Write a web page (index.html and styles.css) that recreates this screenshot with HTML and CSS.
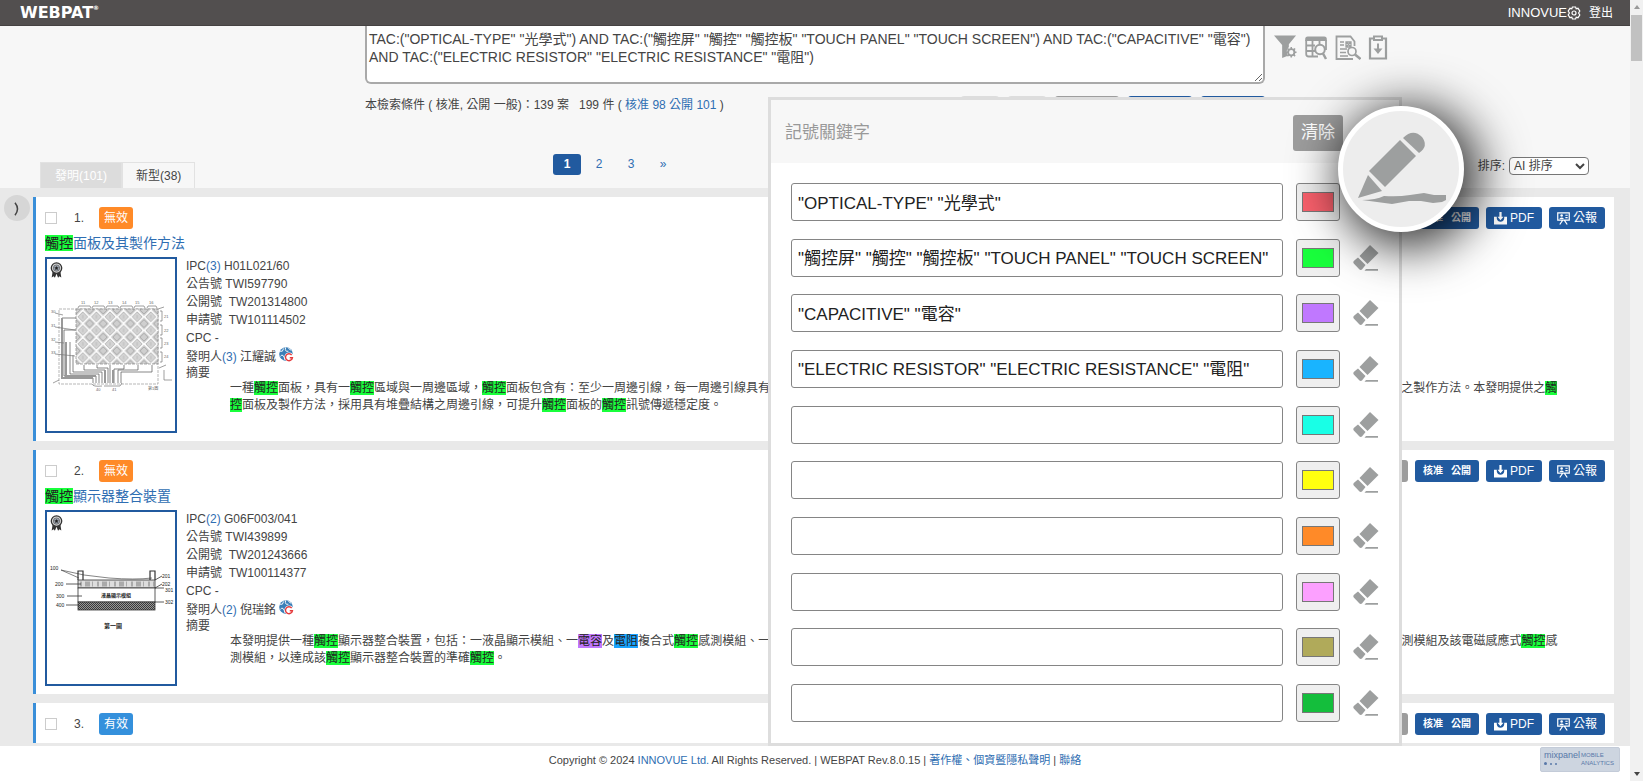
FILE: index.html
```
<!DOCTYPE html>
<html lang="zh-Hant">
<head>
<meta charset="utf-8">
<title>WEBPAT</title>
<link rel="stylesheet" href="styles.css">
</head>
<body>
<svg class="defs" width="0" height="0" aria-hidden="true">
  <defs>
    <symbol id="eraser" viewBox="0 0 26 26"><path d="M17 0 25.500 8 14.500 19 6.500 11Z"/><path d="M5 12.500 12.500 20 9 24.500Q7.500 25.500 6 24L.8 18.500Q-.3 17 1 15.800Z"/><path d="M13 24h12v1.800H11.500z"/></symbol>
    <symbol id="download" viewBox="0 0 14 14"><path d="M0 5h3v2q.8 3.500 4 3.500T11 7V5h3v8.500H0z"/><path d="M5.800 0h2.400v5h2L7 9 3.800 5h2z"/></symbol>
    <symbol id="gazette" viewBox="0 0 14 14"><path fill="none" stroke="currentColor" stroke-width="1.300" d="M.8 1h12.400v7.800H.8zM3 13.500l3-4.500M11 13.500L8 9M9 3.500h2.500M9 6h2.500"/><circle cx="5" cy="3.800" r="1.400"/><path d="M2.500 7.500q2.500-3 5 0z"/></symbol>
    <symbol id="globe" viewBox="0 0 16 16"><circle cx="7.500" cy="7.500" r="7.300" fill="#3b7fb8"/><path d="M1 4.500Q4 6 5 1.500M7 .5q-1 5 3 4M1.500 10q3-4 5 4M10 1.500l3 2" fill="none" stroke="#fff" stroke-width="1"/><circle cx="10.800" cy="10.800" r="5" fill="#fff"/><path d="M13.500 8.500a3.700 3.700 0 1 0 .8 3H11.500" fill="none" stroke="#e5393b" stroke-width="1.500"/></symbol>
    <symbol id="medal" viewBox="0 0 12 15"><path d="M2.500 8 1.500 14.500l1.800-1.200 1.200 1.500L6 11l1.500 3.800 1.200-1.500 1.800 1.200-1-6.500z" fill="#333"/><circle cx="6" cy="5.700" r="4.900" fill="#d5d5d5" stroke="#333" stroke-width="1.200"/><circle cx="6" cy="5.700" r="3" fill="#9aa2ad" stroke="#555" stroke-width=".6"/><path d="M6 3.700l.6 1.300 1.400.2-1 1 .2 1.400L6 6.900l-1.200.7.2-1.400-1-1 1.400-.2z" fill="#222"/></symbol>
    <pattern id="diamonds" width="13.600" height="13.600" patternUnits="userSpaceOnUse" x="76" y="310"><rect width="13.600" height="13.600" fill="#cfcfcf"/><path d="M6.800 .6 13 6.800 6.800 13 .6 6.800Z" fill="#d4d4d4" stroke="#fff" stroke-width="2"/><path d="M6.800 1.800 11.800 6.800 6.800 11.800 1.800 6.800Z" fill="none" stroke="#8d8d8d" stroke-width=".6"/><path d="M0 4 4 0M9.600 0l4 4M0 9.600l4 4M9.600 13.600l4-4" stroke="#8d8d8d" stroke-width=".6"/><path d="M6.800 5v3.500" stroke="#aaa" stroke-width=".6"/></pattern>
    <pattern id="hatch" width="2" height="2" patternUnits="userSpaceOnUse"><rect width="2" height="2" fill="#999"/><path d="M0 0l2 2" stroke="#222" stroke-width=".8"/></pattern>
  </defs>
</svg>

<div class="page">
  <header class="topbar">
    <a class="logo" href="#">WEBPAT<sup>®</sup></a>
    <nav class="account">
      <a href="#" class="user">INNOVUE<svg class="gear" viewBox="0 0 14 14" aria-hidden="true"><path d="M5.400 1h3.200l.6 1.800 1.800-.5L12.800 5 11.600 7l1.200 2-1.800 2.700-1.800-.5-.6 1.800H5.400l-.6-1.800-1.800.5L1.200 9l1.200-2L1.200 5 3 2.300l1.800.5z"/><circle cx="7" cy="7" r="2"/></svg></a>
      <a href="#">登出</a>
    </nav>
  </header>

  <main class="main">
    <section class="query">
      <div class="columns">
        <textarea class="query-text" aria-label="檢索條件">TAC:("OPTICAL-TYPE" "光學式") AND TAC:("觸控屏" "觸控" "觸控板" "TOUCH PANEL" "TOUCH SCREEN") AND TAC:("CAPACITIVE" "電容") AND TAC:("ELECTRIC RESISTOR" "ELECTRIC RESISTANCE" "電阻")</textarea>
        <div class="tools">
          <button aria-label="篩選"><svg width="23" viewBox="0 0 24 26"><path class="fill" d="M0 1h23L15.500 10v3q-4 4-1 9L8.500 24.500V11z"/><circle cx="18" cy="18.500" r="3.300" stroke-width="2"/><path d="M18 13v2M18 22v2M12.500 18.500h2M21.500 18.500h2M14 14.500l1.500 1.500M20.500 21 22 22.500M22 14.500l-1.500 1.500M15.500 21 14 22.500" stroke-width="1.600"/></svg></button>
          <button aria-label="欄位"><svg width="24" viewBox="0 0 24 26"><path class="fill" d="M1.200 7V5q0-2.500 2.500-2.500h16.600q2.500 0 2.500 2.500v2z"/><path d="M2.200 6v14q0 2.500 2.500 2.500H14M22 6v10M2 11.500h9M2 17h9M8.500 6v16M15.500 6v4" stroke-width="1.800"/><circle cx="16" cy="15.500" r="4.800" stroke-width="2"/><path d="M19 19.500l3 5.500" stroke-width="2.500"/></svg></button>
          <button aria-label="報告"><svg width="26" viewBox="0 0 26 26"><path d="M18 25H1.500V2.500h14l4 5V12" stroke-width="1.800"/><path d="M5 8h4M5 11h4M5 15h7M5 18.500h6M5 22h8M11 8h5v5h-5zM11 8l5 5M16 8l-5 5" stroke-width="1.300"/><circle cx="17" cy="17.500" r="4" stroke-width="1.700"/><path d="M20 20.500l5.500 4.500" stroke-width="2.500"/></svg></button>
          <button aria-label="匯出"><svg width="20" viewBox="0 0 20 26"><path d="M2 4.500h16v20H2z" stroke-width="2.200"/><path class="fill" d="M5 1.500h10v5.500H5z"/><path d="M7 4.200h6" stroke="#f7f7f7" stroke-width="1.600"/><path d="M10 9.500v7" stroke-width="2"/><path class="fill" d="M5.500 14.500h9L10 20z"/></svg></button>
        </div>
      </div>
      <div class="columns">
        <div class="status">
          <p class="counts">本檢索條件 ( 核准, 公開 一般)：139 案 &nbsp; 199 件 ( <a href="#">核准 98</a> <a href="#">公開 101</a> )</p>
          <div class="actions" aria-hidden="true"><i class="act pale"></i><i class="act pale"></i><i class="act wide gray"></i><i class="act wide"></i><i class="act wide"></i></div>
        </div>
      </div>
      <div class="columns listbar">
        <div class="tabs">
          <button class="tab active">發明(101)</button><button class="tab">新型(38)</button>
        </div>
        <nav class="pages"><a class="current" href="#">1</a><a href="#">2</a><a href="#">3</a><a href="#">»</a></nav>
        <div class="sort"><label for="sort">排序:</label><select id="sort"><option>AI 排序</option></select></div>
      </div>
    </section>

    <section class="results">
      <button class="expand" aria-label="展開"><svg viewBox="0 0 8 14"><path d="M2 .8Q7 7 2 13.200"/></svg></button>
      <div class="cards">
        <article class="card">
          <div class="card-head">
            <input type="checkbox" id="c1" class="pick"><label for="c1" class="num">1.</label><span class="badge">無效</span>
            <div class="card-actions"><button class="btn gray" aria-label="全文"></button><button class="btn both"><b>核准</b><b>公開</b></button><button class="btn"><svg><use href="#download"/></svg>PDF</button><button class="btn"><svg><use href="#gazette"/></svg>公報</button></div>
          </div>
          <h2 class="title"><a href="#"><mark>觸控</mark>面板及其製作方法</a></h2>
          <div class="card-body">
            <a class="thumb" href="#" aria-label="代表圖">
              <svg class="medal"><use href="#medal"/></svg>
              <svg class="drawing" viewBox="47 259 128 172">
                <g fill="none" stroke="#777" stroke-width=".7">
                  <path d="M59 309h99v75H59z" stroke="#999" stroke-dasharray="3 1"/>
                  <rect x="76" y="309" width="82" height="55" fill="url(#diamonds)" stroke="#888" stroke-dasharray="3 1"/>
                  <path d="M76 318H62v60h31v5M76 330H64v46h32v7M70 342v32h29v9M73 355v17h29v11M84 365v5h21v13M97 365v3h11v15M110 365v18M124 365v4h-10v14M138 365v5h-20v13M152 365v7h-31v11" stroke="#555"/>
                  <path d="M62 318v60h31M66 342v34h30M105 370v13M113 370v13" stroke="#999" stroke-width="2"/>
                  <path d="M78 308l1-2h11l1 2M92 308l1-2h11l1 2M106 308l1-2h11l1 2M120 308l1-2h11l1 2M134 308l1-2h9l1 2M147 308l1-2h8l1 2M160 311h2v10h-2M160 325h2v10h-2M160 338h2v10h-2M160 352h2v10h-2M92 384q1 3 10 2M104 386h16l2-3M55 313l8 2M55 327l20 3M55 342l9 1M55 354l20 2M53 383l6-3M158 309l6-2M159 368l7-3M164 370v10h8"/>
                </g>
                <g fill="#666" font-size="4"><text x="81" y="304">11</text><text x="94" y="304">12</text><text x="108" y="304">13</text><text x="122" y="304">14</text><text x="135" y="304">15</text><text x="149" y="304">16</text><text x="164" y="318">21</text><text x="164" y="332">22</text><text x="164" y="345">23</text><text x="164" y="358">24</text><text x="51" y="313">30</text><text x="51" y="327">31</text><text x="51" y="341">32</text><text x="51" y="354">33</text><text x="96" y="391">40</text><text x="112" y="391">41</text><text x="148" y="390">第1圖</text></g>
              </svg>
            </a>
            <div class="info">
              <p>IPC<a href="#">(3)</a> H01L021/60</p>
              <p>公告號 TWI597790</p>
              <p>公開號 &nbsp;TW201314800</p>
              <p>申請號 &nbsp;TW101114502</p>
              <p>CPC -</p>
              <p>發明人<a href="#">(3)</a> 江耀誠 <svg class="globe"><use href="#globe"/></svg></p>
              <p class="abs-label">摘要</p>
              <p class="abstract">一種<mark>觸控</mark>面板，具有一<mark>觸控</mark>區域與一周邊區域，<mark>觸控</mark>面板包含有：至少一周邊引線，每一周邊引線具有一第一導電層(ITO) 以及第二導電層堆疊於該第一導電層之上，並電性連接至該觸控區域內之感測電極，另提供觸控面板之製作方法。本發明提供之<mark>觸控</mark>面板及製作方法，採用具有堆疊結構之周邊引線，可提升<mark>觸控</mark>面板的<mark>觸控</mark>訊號傳遞穩定度。</p>
            </div>
          </div>
        </article>

        <article class="card">
          <div class="card-head">
            <input type="checkbox" id="c2" class="pick"><label for="c2" class="num">2.</label><span class="badge">無效</span>
            <div class="card-actions"><button class="btn gray" aria-label="全文"></button><button class="btn both"><b>核准</b><b>公開</b></button><button class="btn"><svg><use href="#download"/></svg>PDF</button><button class="btn"><svg><use href="#gazette"/></svg>公報</button></div>
          </div>
          <h2 class="title"><a href="#"><mark>觸控</mark>顯示器整合裝置</a></h2>
          <div class="card-body">
            <a class="thumb" href="#" aria-label="代表圖">
              <svg class="medal"><use href="#medal"/></svg>
              <svg class="drawing" viewBox="47 512 128 172">
                <g fill="none" stroke="#333" stroke-width=".8">
                  <path d="M78 580v-9h5v9M150 580v-9h5v9" stroke-width="1.200"/>
                  <path d="M61 570l18 8M61 570q22 6 48 8t43 0" stroke-width=".6"/>
                  <rect x="78" y="580" width="77" height="8" fill="#ddd"/><path d="M80 584h74" stroke="#aaa" stroke-width="5" stroke-dasharray="2 3 5 2 1 4"/>
                  <rect x="78" y="588" width="77" height="14" fill="#fff"/>
                  <rect x="78" y="602" width="77" height="8" fill="url(#hatch)"/>
                  <path d="M66 584h15M67 596h15M66 605h13M155 580l7-4M155 588l7-4M155 588h9M155 602h9"/>
                </g>
                <g fill="#222" font-size="5"><text x="50" y="570">100</text><text x="55" y="586">200</text><text x="56" y="598">300</text><text x="56" y="607">400</text><text x="162" y="578">201</text><text x="162" y="586">202</text><text x="165" y="592">301</text><text x="165" y="604">302</text><text x="101" y="597" font-weight="bold">液晶顯示模組</text><text x="104" y="628" font-size="6" font-weight="bold">第一圖</text></g>
              </svg>
            </a>
            <div class="info">
              <p>IPC<a href="#">(2)</a> G06F003/041</p>
              <p>公告號 TWI439899</p>
              <p>公開號 &nbsp;TW201243666</p>
              <p>申請號 &nbsp;TW100114377</p>
              <p>CPC -</p>
              <p>發明人<a href="#">(2)</a> 倪瑞銘 <svg class="globe"><use href="#globe"/></svg></p>
              <p class="abs-label">摘要</p>
              <p class="abstract">本發明提供一種<mark>觸控</mark>顯示器整合裝置，包括：一液晶顯示模組、一<mark class="violet">電容</mark>及<mark class="blue">電阻</mark>複合式<mark>觸控</mark>感測模組、一電磁感應式觸控感測模組以及控制模組(A) ，其中該控制模組電性連接該液晶顯示模組，並由該電容及電阻複合式觸控感測模組及該電磁感應式<mark>觸控</mark>感測模組，以達成該<mark>觸控</mark>顯示器整合裝置的準確<mark>觸控</mark>。</p>
            </div>
          </div>
        </article>

        <article class="card">
          <div class="card-head">
            <input type="checkbox" id="c3" class="pick"><label for="c3" class="num">3.</label><span class="badge valid">有效</span>
            <div class="card-actions"><button class="btn gray" aria-label="全文"></button><button class="btn both"><b>核准</b><b>公開</b></button><button class="btn"><svg><use href="#download"/></svg>PDF</button><button class="btn"><svg><use href="#gazette"/></svg>公報</button></div>
          </div>
        </article>
      </div>
    </section>

    <section class="panel" aria-label="記號關鍵字">
      <div class="panel-head"><h1>記號關鍵字</h1><button class="clear">清除</button></div>
      <div class="rows">
        <div class="row"><input type="text" aria-label="關鍵字 1" value='"OPTICAL-TYPE" "光學式"'><input type="color" aria-label="顏色 1" value="#f9606c"><button class="erase" aria-label="清除 1"><svg><use href="#eraser"/></svg></button></div>
        <div class="row"><input type="text" aria-label="關鍵字 2" value='"觸控屏" "觸控" "觸控板" "TOUCH PANEL" "TOUCH SCREEN"'><input type="color" aria-label="顏色 2" value="#19ff3c"><button class="erase" aria-label="清除 2"><svg><use href="#eraser"/></svg></button></div>
        <div class="row"><input type="text" aria-label="關鍵字 3" value='"CAPACITIVE" "電容"'><input type="color" aria-label="顏色 3" value="#c078ff"><button class="erase" aria-label="清除 3"><svg><use href="#eraser"/></svg></button></div>
        <div class="row"><input type="text" aria-label="關鍵字 4" value='"ELECTRIC RESISTOR" "ELECTRIC RESISTANCE" "電阻"'><input type="color" aria-label="顏色 4" value="#19b4ff"><button class="erase" aria-label="清除 4"><svg><use href="#eraser"/></svg></button></div>
        <div class="row"><input type="text" aria-label="關鍵字 5"><input type="color" aria-label="顏色 5" value="#19ffe6"><button class="erase" aria-label="清除 5"><svg><use href="#eraser"/></svg></button></div>
        <div class="row"><input type="text" aria-label="關鍵字 6"><input type="color" aria-label="顏色 6" value="#ffff0f"><button class="erase" aria-label="清除 6"><svg><use href="#eraser"/></svg></button></div>
        <div class="row"><input type="text" aria-label="關鍵字 7"><input type="color" aria-label="顏色 7" value="#ff8a28"><button class="erase" aria-label="清除 7"><svg><use href="#eraser"/></svg></button></div>
        <div class="row"><input type="text" aria-label="關鍵字 8"><input type="color" aria-label="顏色 8" value="#fca0ff"><button class="erase" aria-label="清除 8"><svg><use href="#eraser"/></svg></button></div>
        <div class="row"><input type="text" aria-label="關鍵字 9"><input type="color" aria-label="顏色 9" value="#b0aa5a"><button class="erase" aria-label="清除 9"><svg><use href="#eraser"/></svg></button></div>
        <div class="row"><input type="text" aria-label="關鍵字 10"><input type="color" aria-label="顏色 10" value="#14be3c"><button class="erase" aria-label="清除 10"><svg><use href="#eraser"/></svg></button></div>
      </div>
      <button class="marker" aria-label="記號筆"><svg viewBox="0 0 116 116"><path d="M60 27Q70 17 79 26 86 35 76 42Z"/><path d="M57 29 73 45 42 76 26 60Z"/><path d="M25 64 39 80 15 87Z"/><path d="M19 89q14 0 22-4 14 1 26-1l14-2 10 2 12 0v5l-4 2-9 1-12-2-12 0-17 3-15-2z"/></svg></button>
    </section>
  </main>

  <footer class="footer">
    <p>Copyright © 2024 <a href="#">INNOVUE Ltd.</a> All Rights Reserved. | WEBPAT Rev.8.0.15 | <a href="#">著作權、個資暨隱私聲明</a> | <a href="#">聯絡</a></p>
    <a class="mixpanel" href="#"><span>mixpanel<i><b></b><b></b><b></b></i></span><small>MOBILE ANALYTICS</small></a>
  </footer>
</div>
<div class="scrollbar" aria-hidden="true"><i class="up"></i><i class="thumbbar"></i><i class="down"></i></div>
</body>
</html>
```

FILE: styles.css
```
* { box-sizing: border-box; }
body {
  margin: 0;
  height: 100vh;
  display: flex;
  overflow: hidden;
  background: #fff;
  color: #444;
  font: 12px/18px "Liberation Sans", "Noto Sans CJK TC", sans-serif;
}
button, input, select, textarea { font: inherit; color: inherit; margin: 0; }
button { border: 0; padding: 0; background: none; }
p, h1, h2 { margin: 0; font-weight: normal; }
a { color: #2f6eb2; text-decoration: none; }
.defs { position: absolute; }

.page { flex: 1; min-width: 0; display: flex; flex-direction: column; }

.topbar {
  height: 26px;
  display: flex;
  align-items: center;
  justify-content: space-between;
  padding: 0 17px 0 20px;
  background: #524f4f;
  border-bottom: 1px solid #454242;
}
.topbar a { color: #fff; }
.logo { font: bold 16px/24px "DejaVu Sans", sans-serif; display: flex; }
.logo sup { font-size: 6px; line-height: 14px; }
.account { display: flex; gap: 8px; }
.account a { display: flex; align-items: center; }
.account .user { font-size: 13px; }
.gear { width: 14px; height: 14px; fill: none; stroke: #fff; stroke-width: 1.2; }

.main { flex: 1; min-height: 0; position: relative; display: flex; flex-direction: column; }

.query { background: #f7f7f7; }
.columns { display: grid; grid-template-columns: minmax(0, 1fr) minmax(0, 900px) minmax(0, 1fr); }
.query-text {
  grid-column: 2;
  height: 58px;
  padding: 4px 2px;
  border: 2px solid #a9a9a9;
  border-top: 0;
  border-radius: 0 0 6px 6px;
  background: #fff;
  font-size: 14px;
  line-height: 18px;
  overflow: hidden;
  resize: vertical;
}
.tools { display: flex; gap: 7px; padding: 8px 0 0 9px; align-items: flex-start; }
.tools svg { display: block; height: 26px; fill: none; stroke: #9d9f9f; }
.tools .fill { fill: #9d9f9f; stroke: none; }

.status { grid-column: 2; display: flex; justify-content: space-between; align-items: flex-start; padding-top: 12px; }
.counts { white-space: nowrap; }
.actions { display: flex; gap: 9px; }
.act { width: 38px; height: 22px; border-radius: 3px; background: #215a9f; }
.act.wide { width: 64px; }
.act.pale { background: #ddd; }
.act.gray { background: #9d9d9d; }

.listbar { padding-top: 36px; }
.tabs { padding-left: 40px; display: flex; align-items: flex-end; }
.tab { height: 26px; padding: 0 13px; border: 1px solid #e2e2e2; border-bottom: 0; }
.tab.active { padding: 0 14px; background: #dcdcdc; color: #fff; }
.pages { height: 34px; padding-left: 188px; display: flex; gap: 4px; align-items: flex-start; }
.pages a { width: 28px; line-height: 21px; text-align: center; }
.pages .current { background: #215a9f; color: #fff; border-radius: 3px; font-weight: bold; }
.sort { display: flex; justify-content: flex-end; align-items: flex-start; gap: 4px; padding: 3px 41px 0 0; }
.sort select { width: 80px; height: 18px; padding: 0; border: 1px solid #767676; border-radius: 4px; background: #fff; }

.results {
  flex: 1;
  min-height: 0;
  overflow: hidden;
  display: flex;
  gap: 3px;
  align-items: flex-start;
  padding: 9px 16px 0 4px;
  background: #e9e9e9;
  border-bottom: 3px solid #e9e9e9;
}
.expand { flex: none; width: 26px; height: 26px; margin-top: -2px; border-radius: 50%; background: #d6d6d6; }
.expand svg { width: 8px; height: 14px; fill: none; stroke: #444; stroke-width: 1.5; vertical-align: middle; }
.cards { flex: 1; min-width: 0; display: flex; flex-direction: column; gap: 9px; }
.card { background: #fff; border-left: 3px solid #3a8fd9; padding: 10px 9px 8px; }
.card-head { display: flex; align-items: center; height: 22px; }
.pick { appearance: none; width: 12px; height: 12px; border: 1px solid #ccc; background: #fff; }
.num { width: 42px; padding-left: 17px; }
.badge { line-height: 22px; padding: 0 5px; border-radius: 3px; background: #ff8a28; color: #fff; }
.badge.valid { background: #3490dc; }
.card-actions { margin-left: auto; display: flex; gap: 7px; }
.btn {
  width: 56px;
  height: 22px;
  display: flex;
  align-items: center;
  justify-content: center;
  gap: 3px;
  border-radius: 3px;
  background: #215a9f;
  color: #fff;
}
.btn svg { width: 13px; height: 13px; fill: #fff; }
.btn.both { width: 64px; gap: 8px; font-size: 10px; }
.btn.gray { background: #9d9d9d; }
.title { margin: 4px 0; font-size: 14px; line-height: 20px; }
.card-body { display: flex; gap: 9px; }
.thumb { flex: none; width: 132px; height: 176px; border: 2px solid #215a9f; position: relative; display: block; }
.drawing { width: 100%; height: 100%; display: block; }
.medal { position: absolute; left: 3px; top: 3px; width: 13px; height: 16px; }
.info { flex: 1; min-width: 0; }
.globe { width: 15px; height: 15px; vertical-align: -1px; }
.info .abs-label { line-height: 14px; }
.abstract { padding: 0 41px 0 44px; line-height: 17px; }
mark { background: #19ff3c; color: #222; }
mark.violet { background: #c078ff; }
mark.blue { background: #19a4ff; }

.panel {
  position: absolute;
  top: 71px;
  bottom: 0;
  right: 228px;
  width: 634px;
  display: flex;
  flex-direction: column;
  background: #fff;
  border: 3px solid #ddd;
}
.panel-head { display: flex; align-items: center; justify-content: space-between; height: 63px; padding: 2px 56px 0 14px; background: #f7f7f7; }
.panel-head h1 { font-size: 17px; line-height: 26px; color: #999; }
.clear { padding: 0 8px; font-size: 17px; line-height: 36px; border-radius: 3px; background: #9d9d9d; color: #fff; }
.rows { flex: 1; display: flex; flex-direction: column; justify-content: space-between; padding: 20px 20px 21px; }
.row { display: flex; align-items: center; }
.row input { height: 38px; border: 1px solid #858585; border-radius: 3px; }
.row input[type="text"] { flex: 1; min-width: 0; margin-right: 13px; padding: 0 6px 2px; background: #fff; color: #222; font-size: 17px; }
.row input[type="color"] { width: 44px; padding: 0; background: #efefef; }
.row input[type="color"]::-webkit-color-swatch-wrapper { padding: 8px 5px; }
.row input[type="color"]::-webkit-color-swatch { border: 1px solid #777; border-radius: 0; }
.erase { margin-left: 13px; }
.erase svg { display: block; width: 26px; height: 26px; fill: #9d9f9f; }
.marker {
  position: absolute;
  top: 6px;
  right: -65px;
  width: 126px;
  height: 126px;
  border: 5px solid #fff;
  border-radius: 50%;
  background: #ededed;
  box-shadow: 8px 8px 48px 8px rgba(0, 0, 0, 0.8);
}
.marker svg { display: block; width: 116px; height: 116px; fill: #9d9f9f; }

.footer { height: 35px; display: grid; grid-template-columns: minmax(0, 1fr) auto minmax(0, 1fr); background: #fff; font-size: 11px; line-height: 28px; white-space: nowrap; }
.footer p { grid-column: 2; }
.mixpanel {
  justify-self: end;
  align-self: start;
  width: 80px;
  height: 25px;
  margin: 1px 10px 0 0;
  padding: 3px 3px;
  display: flex;
  justify-content: space-between;
  border: 1px solid #c3cbd8;
  border-radius: 2px;
  background: #cdd5e0;
  color: #5878a8;
  font-size: 9px;
  line-height: 9px;
}
.mixpanel small { width: 35px; font-size: 6px; line-height: 8px; white-space: normal; }
.mixpanel i { display: flex; gap: 3px; align-items: center; padding-top: 2px; }
.mixpanel b { width: 3px; height: 3px; border-radius: 50%; background: #5878a8; }
.mixpanel b + b { width: 2px; height: 2px; }

.scrollbar { width: 13px; display: flex; flex-direction: column; align-items: center; padding: 5px 0; background: #f1f1f1; }
.up { border: 3px solid transparent; border-top: 0; border-bottom: 4px solid #999; }
.thumbbar { width: 11px; height: 46px; margin-top: 6px; background: #c1c1c1; }
.down { margin-top: auto; border: 3px solid transparent; border-bottom: 0; border-top: 4px solid #444; }
```
